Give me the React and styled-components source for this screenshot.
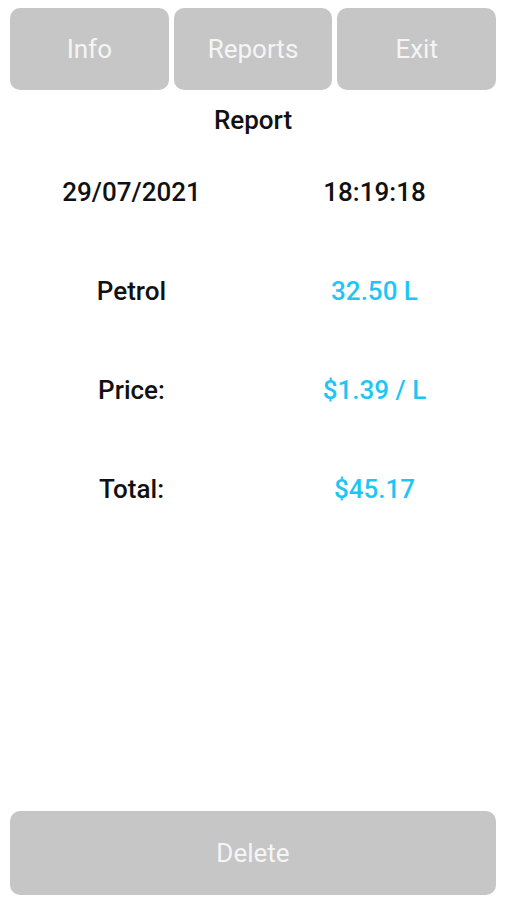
import styled, { createGlobalStyle } from 'styled-components'

const GlobalStyle = createGlobalStyle`
  html, body {
    margin: 0;
    padding: 0;
    background: #ffffff;
  }
  body {
    font-family: Roboto, 'Liberation Sans', sans-serif;
  }
`

const rows = [
  { label: '29/07/2021', value: '18:19:18', highlight: false },
  { label: 'Petrol', value: '32.50 L', highlight: true },
  { label: 'Price:', value: '$1.39 / L', highlight: true },
  { label: 'Total:', value: '$45.17', highlight: true },
]

function App() {
  return (
    <>
      <GlobalStyle />
      <Screen>
        <TopBar>
          <NavButton>Info</NavButton>
          <NavButton>Reports</NavButton>
          <NavButton>Exit</NavButton>
        </TopBar>

        <Title>Report</Title>

        <Details>
          {rows.map((row) => (
            <Row key={row.label}>
              <Cell>{row.label}</Cell>
              <Cell $highlight={row.highlight}>{row.value}</Cell>
            </Row>
          ))}
        </Details>

        <DeleteButton>Delete</DeleteButton>
      </Screen>
    </>
  )
}

export default App

const Screen = styled.div`
  height: 100vh;
  box-sizing: border-box;
  padding: 8px 10px 5px;
  display: flex;
  flex-direction: column;
`

const TopBar = styled.div`
  display: grid;
  grid-template-columns: repeat(3, 1fr);
  gap: 5px;
`

const NavButton = styled.button`
  height: 82px;
  border: none;
  border-radius: 10px;
  background: #c6c6c6;
  color: #f5f5f5;
  font-family: Roboto, 'Liberation Sans', sans-serif;
  font-size: 26px;
  font-weight: 400;
  padding: 0;
`

const Title = styled.h1`
  margin: 15px 0 0;
  line-height: 30px;
  text-align: center;
  font-size: 26px;
  font-weight: 500;
  color: #111111;
`

const Details = styled.div`
  margin-top: 42px;
  display: flex;
  flex-direction: column;
  gap: 69px;
`

const Row = styled.div`
  display: grid;
  grid-template-columns: 1fr 1fr;
`

const Cell = styled.div`
  text-align: center;
  line-height: 30px;
  font-size: 26px;
  font-weight: 500;
  color: ${(p) => (p.$highlight ? '#1fc6f5' : '#111111')};
`

const DeleteButton = styled.button`
  margin-top: auto;
  height: 84px;
  border: none;
  border-radius: 10px;
  background: #c6c6c6;
  color: #f5f5f5;
  font-family: Roboto, 'Liberation Sans', sans-serif;
  font-size: 26px;
  font-weight: 400;
`
